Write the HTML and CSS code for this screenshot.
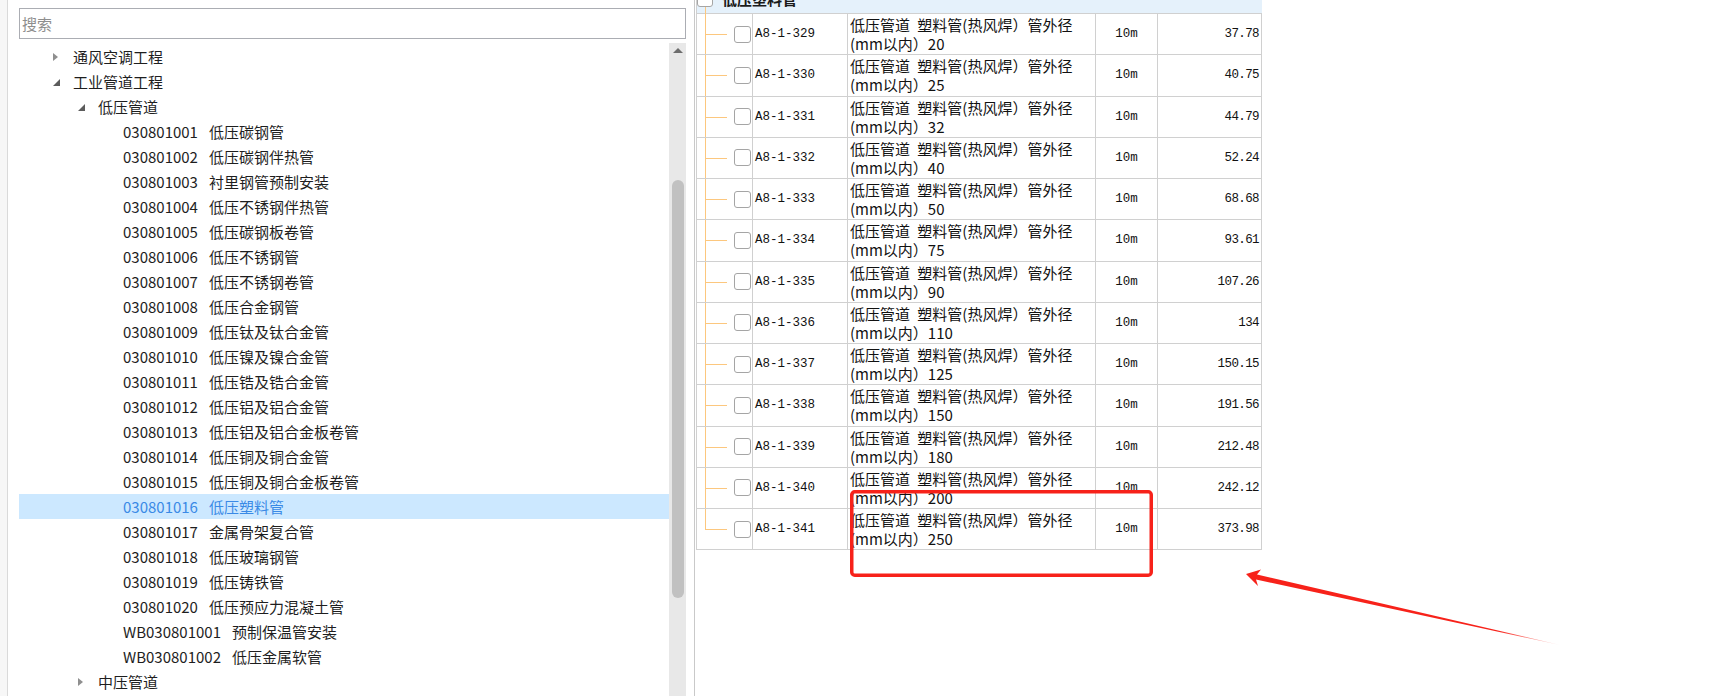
FILE: index.html
```html
<!DOCTYPE html>
<html lang="zh-CN">
<head>
    <meta charset="UTF-8">
    <meta name="viewport" content="width=device-width, initial-scale=1.0">
    <title>清单定额</title>
    <link rel="stylesheet" href="styles.css">
</head>
<body>
    <div class="app">
        <!-- left: bill item tree -->
        <div class="left-panel">
            <input class="search" type="text" placeholder="搜索">
            <div class="tree-wrap">
                <div class="tree-list">
                    <div class="tree-row lv0"><span class="toggle closed"></span><span>通风空调工程</span></div>
                    <div class="tree-row lv0"><span class="toggle open"></span><span>工业管道工程</span></div>
                    <div class="tree-row lv1"><span class="toggle open"></span><span>低压管道</span></div>
                    <div class="tree-row lv2"><span class="toggle"></span><span class="code">030801001</span><span class="name">低压碳钢管</span></div>
                    <div class="tree-row lv2"><span class="toggle"></span><span class="code">030801002</span><span class="name">低压碳钢伴热管</span></div>
                    <div class="tree-row lv2"><span class="toggle"></span><span class="code">030801003</span><span class="name">衬里钢管预制安装</span></div>
                    <div class="tree-row lv2"><span class="toggle"></span><span class="code">030801004</span><span class="name">低压不锈钢伴热管</span></div>
                    <div class="tree-row lv2"><span class="toggle"></span><span class="code">030801005</span><span class="name">低压碳钢板卷管</span></div>
                    <div class="tree-row lv2"><span class="toggle"></span><span class="code">030801006</span><span class="name">低压不锈钢管</span></div>
                    <div class="tree-row lv2"><span class="toggle"></span><span class="code">030801007</span><span class="name">低压不锈钢卷管</span></div>
                    <div class="tree-row lv2"><span class="toggle"></span><span class="code">030801008</span><span class="name">低压合金钢管</span></div>
                    <div class="tree-row lv2"><span class="toggle"></span><span class="code">030801009</span><span class="name">低压钛及钛合金管</span></div>
                    <div class="tree-row lv2"><span class="toggle"></span><span class="code">030801010</span><span class="name">低压镍及镍合金管</span></div>
                    <div class="tree-row lv2"><span class="toggle"></span><span class="code">030801011</span><span class="name">低压锆及锆合金管</span></div>
                    <div class="tree-row lv2"><span class="toggle"></span><span class="code">030801012</span><span class="name">低压铝及铝合金管</span></div>
                    <div class="tree-row lv2"><span class="toggle"></span><span class="code">030801013</span><span class="name">低压铝及铝合金板卷管</span></div>
                    <div class="tree-row lv2"><span class="toggle"></span><span class="code">030801014</span><span class="name">低压铜及铜合金管</span></div>
                    <div class="tree-row lv2"><span class="toggle"></span><span class="code">030801015</span><span class="name">低压铜及铜合金板卷管</span></div>
                    <div class="tree-row lv2 selected"><span class="toggle"></span><span class="code">030801016</span><span class="name">低压塑料管</span></div>
                    <div class="tree-row lv2"><span class="toggle"></span><span class="code">030801017</span><span class="name">金属骨架复合管</span></div>
                    <div class="tree-row lv2"><span class="toggle"></span><span class="code">030801018</span><span class="name">低压玻璃钢管</span></div>
                    <div class="tree-row lv2"><span class="toggle"></span><span class="code">030801019</span><span class="name">低压铸铁管</span></div>
                    <div class="tree-row lv2"><span class="toggle"></span><span class="code">030801020</span><span class="name">低压预应力混凝土管</span></div>
                    <div class="tree-row lv2"><span class="toggle"></span><span class="code">WB030801001</span><span class="name">预制保温管安装</span></div>
                    <div class="tree-row lv2"><span class="toggle"></span><span class="code">WB030801002</span><span class="name">低压金属软管</span></div>
                    <div class="tree-row lv1"><span class="toggle closed"></span><span>中压管道</span></div>
                </div>
                <div class="scrollbar">
                    <span class="sb-up"></span>
                    <span class="sb-thumb"></span>
                </div>
            </div>
        </div>

        <!-- right: quota list -->
        <div class="right-panel">
            <div class="quota-table">
                <div class="group-row"><span class="check"></span><span class="group-title">低压塑料管</span></div>

                <div class="data-row"><div class="cell tree-cell"><span class="check"></span></div><div class="cell code-cell">A8-1-329</div><div class="cell desc-cell"><span>低压管道 塑料管(热风焊）管外径</span><span>(mm以内）20</span></div><div class="cell unit-cell">10m</div><div class="cell price-cell">37.78</div></div>
                <div class="data-row"><div class="cell tree-cell"><span class="check"></span></div><div class="cell code-cell">A8-1-330</div><div class="cell desc-cell"><span>低压管道 塑料管(热风焊）管外径</span><span>(mm以内）25</span></div><div class="cell unit-cell">10m</div><div class="cell price-cell">40.75</div></div>
                <div class="data-row"><div class="cell tree-cell"><span class="check"></span></div><div class="cell code-cell">A8-1-331</div><div class="cell desc-cell"><span>低压管道 塑料管(热风焊）管外径</span><span>(mm以内）32</span></div><div class="cell unit-cell">10m</div><div class="cell price-cell">44.79</div></div>
                <div class="data-row"><div class="cell tree-cell"><span class="check"></span></div><div class="cell code-cell">A8-1-332</div><div class="cell desc-cell"><span>低压管道 塑料管(热风焊）管外径</span><span>(mm以内）40</span></div><div class="cell unit-cell">10m</div><div class="cell price-cell">52.24</div></div>
                <div class="data-row"><div class="cell tree-cell"><span class="check"></span></div><div class="cell code-cell">A8-1-333</div><div class="cell desc-cell"><span>低压管道 塑料管(热风焊）管外径</span><span>(mm以内）50</span></div><div class="cell unit-cell">10m</div><div class="cell price-cell">68.68</div></div>
                <div class="data-row"><div class="cell tree-cell"><span class="check"></span></div><div class="cell code-cell">A8-1-334</div><div class="cell desc-cell"><span>低压管道 塑料管(热风焊）管外径</span><span>(mm以内）75</span></div><div class="cell unit-cell">10m</div><div class="cell price-cell">93.61</div></div>
                <div class="data-row"><div class="cell tree-cell"><span class="check"></span></div><div class="cell code-cell">A8-1-335</div><div class="cell desc-cell"><span>低压管道 塑料管(热风焊）管外径</span><span>(mm以内）90</span></div><div class="cell unit-cell">10m</div><div class="cell price-cell">107.26</div></div>
                <div class="data-row"><div class="cell tree-cell"><span class="check"></span></div><div class="cell code-cell">A8-1-336</div><div class="cell desc-cell"><span>低压管道 塑料管(热风焊）管外径</span><span>(mm以内）110</span></div><div class="cell unit-cell">10m</div><div class="cell price-cell">134</div></div>
                <div class="data-row"><div class="cell tree-cell"><span class="check"></span></div><div class="cell code-cell">A8-1-337</div><div class="cell desc-cell"><span>低压管道 塑料管(热风焊）管外径</span><span>(mm以内）125</span></div><div class="cell unit-cell">10m</div><div class="cell price-cell">150.15</div></div>
                <div class="data-row"><div class="cell tree-cell"><span class="check"></span></div><div class="cell code-cell">A8-1-338</div><div class="cell desc-cell"><span>低压管道 塑料管(热风焊）管外径</span><span>(mm以内）150</span></div><div class="cell unit-cell">10m</div><div class="cell price-cell">191.56</div></div>
                <div class="data-row"><div class="cell tree-cell"><span class="check"></span></div><div class="cell code-cell">A8-1-339</div><div class="cell desc-cell"><span>低压管道 塑料管(热风焊）管外径</span><span>(mm以内）180</span></div><div class="cell unit-cell">10m</div><div class="cell price-cell">212.48</div></div>
                <div class="data-row"><div class="cell tree-cell"><span class="check"></span></div><div class="cell code-cell">A8-1-340</div><div class="cell desc-cell"><span>低压管道 塑料管(热风焊）管外径</span><span>(mm以内）200</span></div><div class="cell unit-cell">10m</div><div class="cell price-cell">242.12</div></div>
                <div class="data-row last"><div class="cell tree-cell"><span class="check"></span></div><div class="cell code-cell">A8-1-341</div><div class="cell desc-cell"><span>低压管道 塑料管(热风焊）管外径</span><span>(mm以内）250</span></div><div class="cell unit-cell">10m</div><div class="cell price-cell">373.98</div></div>
            </div>
        </div>
    </div>

    <!-- red annotation drawn over the screenshot -->
    <svg class="markup" width="1725" height="696" viewBox="0 0 1725 696">
        <defs>
            <linearGradient id="tail-fade" x1="1246" y1="574" x2="1560" y2="645" gradientUnits="userSpaceOnUse">
                <stop offset="0" stop-color="#f7221a"/>
                <stop offset="0.8" stop-color="#f7221a"/>
                <stop offset="1" stop-color="#f7221a" stop-opacity="0.15"/>
            </linearGradient>
        </defs>
        <rect x="851.75" y="491.75" width="299.5" height="83.5" rx="3" fill="none" stroke="#f7221a" stroke-width="3.5"/>
        <polygon points="1246,574 1261,569.5 1257,574.5 1560,645 1256,579.5 1258,586" fill="url(#tail-fade)"/>
    </svg>
</body>
</html>
```

FILE: styles.css
```css
* {
    box-sizing: border-box;
}

body {
    margin: 0;
    position: relative;
    height: 696px;
    overflow: hidden;
    background-color: #f7f7f7;
    font-family: "Noto Sans CJK SC", "Noto Sans", sans-serif;
    color: #1a1a1a;
}

.app {
    display: flex;
    height: 696px;
}

/* left panel */
.left-panel {
    width: 687px;
    margin-left: 7px;
    padding: 8px 8px 0 11px;
    border-left: 1px solid #dadada;
    background-color: #fff;
    display: flex;
    flex-direction: column;
}

.search {
    width: 100%;
    height: 31px;
    padding: 0 2px;
    border: 1px solid #abadb3;
    outline: none;
    font-family: "Noto Sans CJK SC", "Noto Sans", sans-serif;
    font-size: 15px;
    color: #333;
}

.search::placeholder {
    color: #8e8e8e;
}

.tree-wrap {
    flex: 1;
    min-height: 0;
    margin-top: 4px;
    display: flex;
}

.tree-list {
    flex: 1;
    padding-top: 1px;
    overflow: hidden;
}

.tree-row {
    height: 25px;
    display: flex;
    align-items: center;
    font-size: 15px;
    white-space: nowrap;
    color: #1e1e1e;
}

.tree-row.lv0 {
    padding-left: 34px;
}

.tree-row.lv1 {
    padding-left: 59px;
}

.tree-row.lv2 {
    padding-left: 84px;
}

.tree-row.selected {
    background-color: #cce8ff;
    color: #3a8ae6;
}

.toggle {
    flex: none;
    width: 20px;
    display: flex;
    align-items: center;
}

.toggle.closed::before {
    content: "";
    border-left: 5px solid #8f8f8f;
    border-top: 4px solid transparent;
    border-bottom: 4px solid transparent;
}

.toggle.open::before {
    content: "";
    margin-top: 2px;
    border-bottom: 7px solid #5c5c5c;
    border-left: 7px solid transparent;
}

.tree-row .name {
    margin-left: 11px;
}

.scrollbar {
    flex: none;
    width: 17px;
    background-color: #e8e8e8;
    display: flex;
    flex-direction: column;
    align-items: center;
}

.sb-up {
    margin-top: 5px;
    border-left: 5px solid transparent;
    border-right: 5px solid transparent;
    border-bottom: 5px solid #6d6d6d;
}

.sb-thumb {
    width: 12px;
    height: 418px;
    margin-top: 127px;
    border-radius: 6px;
    background-color: #c1c1c1;
}

/* right panel */
.right-panel {
    flex: 1;
    padding-left: 1px;
    border-left: 1px solid #c9c9c9;
    background-color: #fff;
    overflow: hidden;
}

.quota-table {
    width: 566px;
    margin-top: -16px;
    border-left: 1px solid #d0d0d0;
}

.check {
    flex: none;
    position: relative;
    z-index: 1;
    width: 17px;
    height: 17px;
    border: 1px solid #a5a5a5;
    border-radius: 3px;
    background-color: #fff;
}

.group-row {
    position: relative;
    height: 30px;
    display: flex;
    align-items: center;
    background-color: #e5f1fb;
    border-bottom: 1px solid #d0d0d0;
}

.group-row .check {
    width: 16px;
    height: 16px;
}

.group-row::after {
    content: "";
    position: absolute;
    left: 8px;
    top: 50%;
    bottom: -1px;
    width: 1px;
    background-color: #fcc77e;
}

.group-title {
    margin-left: 9px;
    font-size: 15px;
    font-weight: bold;
}

.data-row {
    display: grid;
    grid-template-columns: 56px 95px 248px 62px 104px;
    height: 41.25px;
}

.cell {
    display: flex;
    align-items: center;
    border-right: 1px solid #d0d0d0;
    border-bottom: 1px solid #d0d0d0;
    overflow: hidden;
    white-space: nowrap;
}

.tree-cell {
    position: relative;
    justify-content: flex-end;
    padding-right: 1px;
}

.tree-cell::before {
    content: "";
    position: absolute;
    left: 8px;
    top: -1px;
    bottom: -1px;
    width: 1px;
    background-color: #fcc77e;
}

.data-row.last .tree-cell::before {
    bottom: 50%;
}

.tree-cell::after {
    content: "";
    position: absolute;
    left: 8px;
    top: 50%;
    width: 22px;
    height: 1px;
    background-color: #fcc77e;
}

.code-cell,
.unit-cell,
.price-cell {
    font-family: "Liberation Mono", "DejaVu Sans Mono", monospace;
    font-size: 12.5px;
    color: #111;
}

.code-cell {
    padding-left: 2px;
}

.desc-cell {
    padding-left: 2px;
    flex-direction: column;
    justify-content: center;
    align-items: flex-start;
    font-size: 15px;
    line-height: 19px;
    word-spacing: 4px;
    color: #111;
}

.unit-cell {
    justify-content: center;
}

.price-cell {
    justify-content: flex-end;
    padding-right: 2px;
    letter-spacing: -0.6px;
}

/* annotation overlay */
.markup {
    position: absolute;
    top: 0;
    left: 0;
    pointer-events: none;
}
```
